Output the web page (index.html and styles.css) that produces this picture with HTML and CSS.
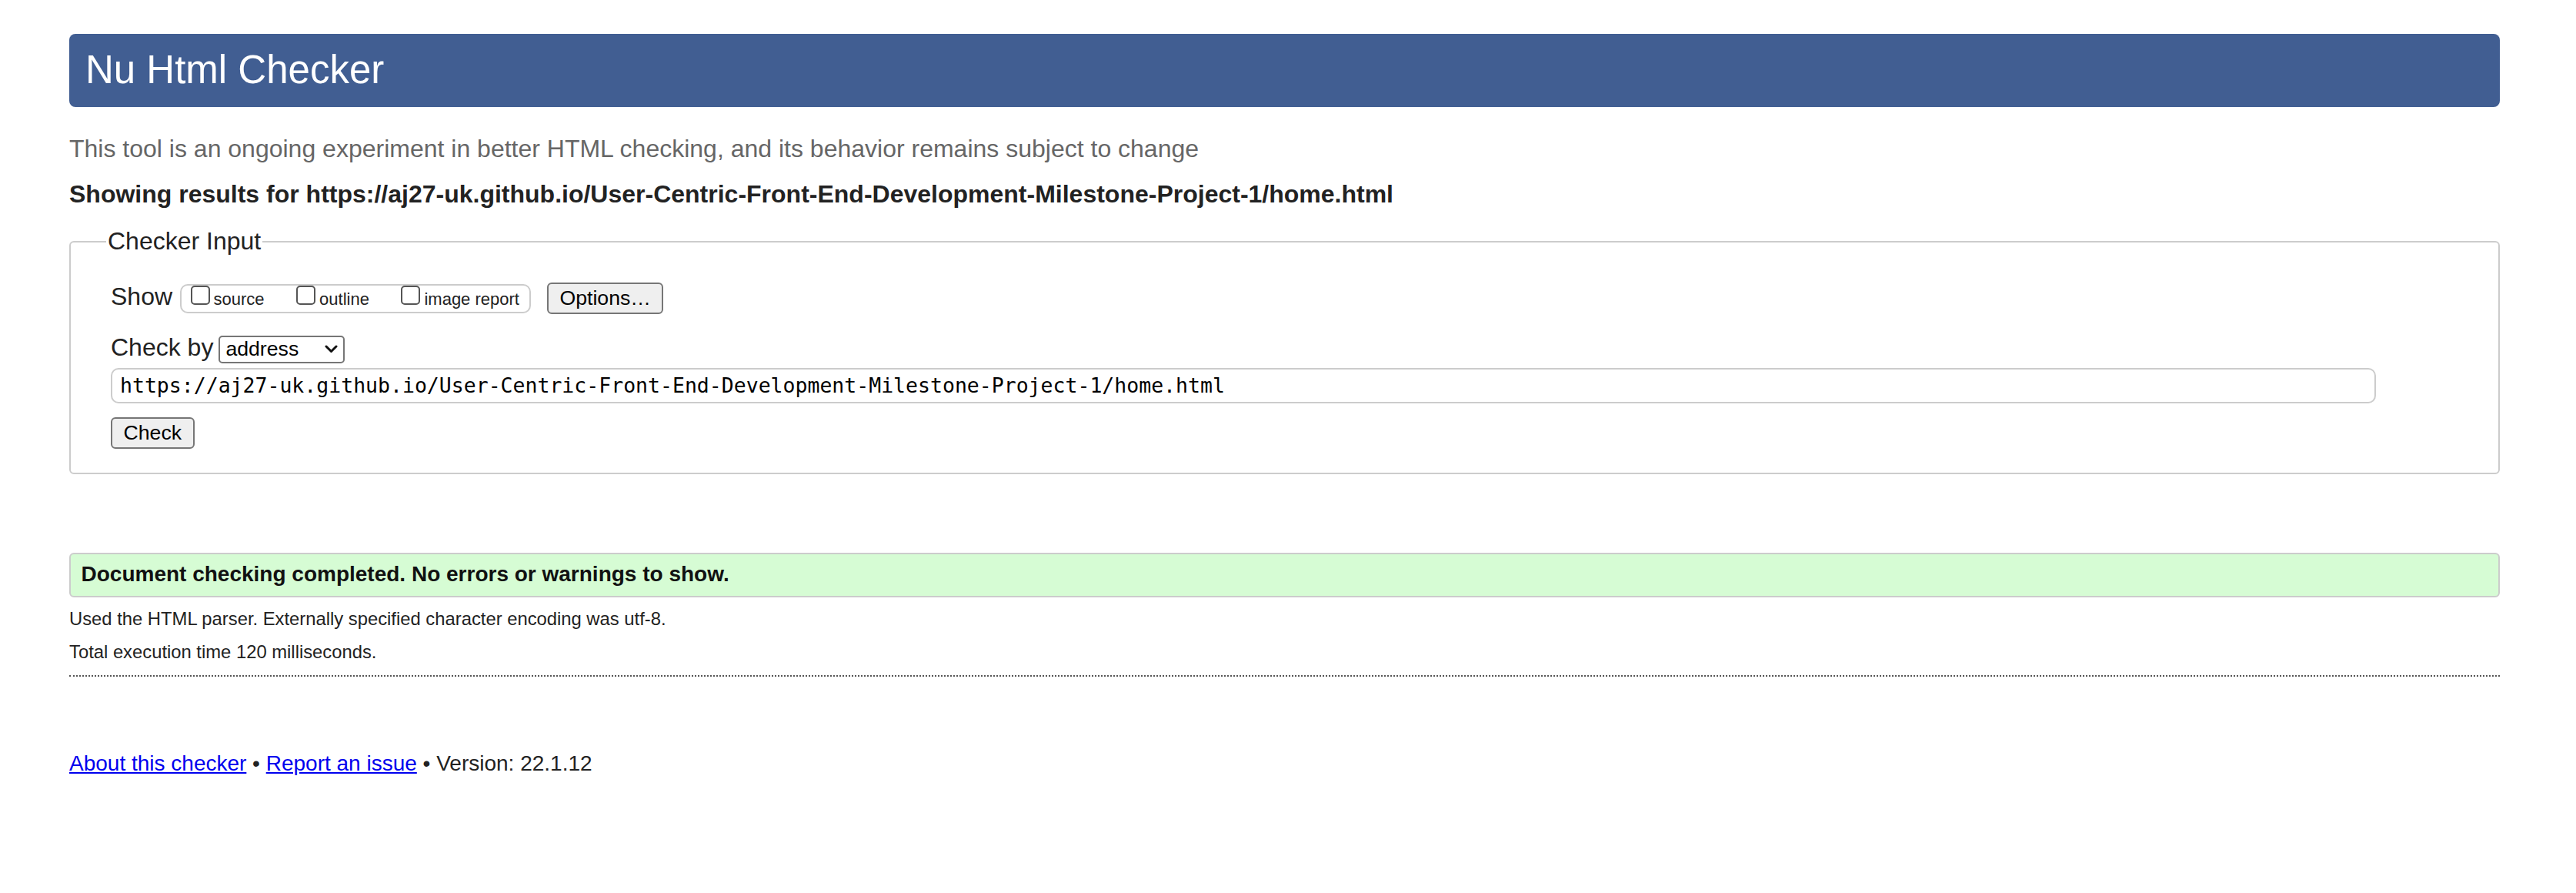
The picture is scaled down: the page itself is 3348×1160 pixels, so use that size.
FILE: index.html
```html
<!DOCTYPE html>
<html lang="en">
<head>
<meta charset="utf-8">
<title>Showing results for https://aj27-uk.github.io/User-Centric-Front-End-Development-Milestone-Project-1/home.html - Nu Html Checker</title>
<link rel="stylesheet" href="styles.css">
</head>
<body>
<div class="page">
  <h1 class="banner">Nu Html Checker</h1>
  <p class="intro">This tool is an ongoing experiment in better HTML checking, and its behavior remains subject to change</p>
  <p class="showing">Showing results for https://aj27-uk.github.io/User-Centric-Front-End-Development-Milestone-Project-1/home.html</p>

  <fieldset class="checker">
    <legend class="checker-legend">Checker Input</legend>
    <div class="row">
      <span class="row-label row-label-show">Show</span>
      <div class="opts">
        <label class="opt"><input type="checkbox" class="cb"><span class="opt-text">source</span></label>
        <label class="opt"><input type="checkbox" class="cb"><span class="opt-text">outline</span></label>
        <label class="opt"><input type="checkbox" class="cb"><span class="opt-text">image report</span></label>
      </div>
      <button type="button" class="btn btn-options">Options…</button>
    </div>
    <div class="row row-by">
      <span class="row-label row-label-by">Check by</span>
      <div class="select">
        <span class="select-text">address</span>
        <svg class="chevron" width="17" height="11" viewBox="0 0 17 11" aria-hidden="true"><polyline points="2,2 8.5,8.5 15,2" fill="none" stroke="#111" stroke-width="3" stroke-linecap="round" stroke-linejoin="round"/></svg>
      </div>
    </div>
    <div class="url-wrap">
      <input class="url" type="url" value="https://aj27-uk.github.io/User-Centric-Front-End-Development-Milestone-Project-1/home.html">
    </div>
    <div class="submit-wrap">
      <button type="button" class="btn">Check</button>
    </div>
  </fieldset>

  <p class="success">Document checking completed. No errors or warnings to show.</p>
  <p class="details details-first">Used the HTML parser. Externally specified character encoding was utf-8.</p>
  <p class="details">Total execution time 120 milliseconds.</p>
  <hr class="rule">

  <p class="footer"><a href="#about" class="footer-link">About this checker</a> • <a href="#issue" class="footer-link">Report an issue</a> • Version: 22.1.12</p>
</div>
</body>
</html>
```

FILE: styles.css
```css
* {
  box-sizing: border-box;
}

html {
  background: #fff;
}

body {
  margin: 0;
  font-family: "Liberation Sans", Arial, Helvetica, sans-serif;
  font-size: 32px;
  color: #222;
}

.page {
  margin: 44px 99px 0 90px;
}

.banner {
  margin: 0;
  padding: 17px 21px 19px;
  background: #415e92;
  color: #fff;
  font-size: 51px;
  font-weight: normal;
  line-height: normal;
  border-radius: 8px;
}

.intro {
  margin: 35.5px 0 0;
  color: #666;
}

.showing {
  margin: 22.5px 0 0;
  font-weight: bold;
}

.checker {
  margin: 24.4px 0 0;
  padding: 35px 52px 31px 52px;
  border: 2px solid #ccc;
  border-radius: 6px;
  min-width: 0;
}

.checker-legend {
  margin-left: -6px;
  padding: 0 2px;
}

.row {
  display: flex;
  align-items: flex-start;
}

.row-by {
  margin-top: 24.8px;
}

.row-label {
  line-height: normal;
}

.row-label-show {
  margin-right: 9.5px;
}

.row-label-by {
  margin-right: 7px;
}

.opts {
  display: flex;
  align-items: flex-start;
  gap: 41.5px;
  height: 38px;
  margin-top: 2px;
  padding: 0 13px 0 12px;
  border: 2px solid #ccc;
  border-radius: 10px;
}

.opt {
  display: flex;
  align-items: flex-start;
  font-size: 22px;
  color: #222;
}

.cb {
  -webkit-appearance: none;
  appearance: none;
  width: 25px;
  height: 25px;
  margin: 0 5px 0 0;
  border: 2px solid #555;
  border-radius: 5px;
  background: #fff;
}

.opt-text {
  padding-top: 5px;
  line-height: 25px;
}

.btn {
  margin: 0;
  padding: 3px 14.5px;
  font-family: inherit;
  font-size: 26.67px;
  line-height: normal;
  color: #000;
  background: #efefef;
  border: 2px solid #767676;
  border-radius: 6px;
}

.btn-options {
  margin-left: 21px;
}

.select {
  display: flex;
  align-items: center;
  justify-content: space-between;
  width: 164px;
  height: 36px;
  margin-top: 2.5px;
  padding: 0 7px;
  border: 2px solid #767676;
  border-radius: 5px;
  background: #fff;
  font-size: 26.67px;
  color: #000;
}

.chevron {
  display: block;
}

.url-wrap {
  margin-top: 6px;
}

.url {
  display: block;
  width: 2944px;
  height: 46px;
  margin: 0;
  padding: 0 10px;
  border: 2px solid #ccc;
  border-radius: 10px;
  background: #fff;
  font-family: "DejaVu Sans Mono", "Liberation Mono", monospace;
  font-size: 26.5px;
  color: #000;
}

.submit-wrap {
  margin-top: 18px;
}

.success {
  margin: 102px 0 0;
  padding: 10px 13.5px 12px;
  background: #d6fcd4;
  border: 2px solid #ccc;
  border-radius: 6px;
  font-size: 28px;
  font-weight: bold;
  color: #111;
}

.details {
  margin: 14.7px 0 0;
  font-size: 23.8px;
}

.details-first {
  margin-top: 14.4px;
}

.rule {
  height: 0;
  margin: 16.7px 0 0;
  border: 0;
  border-top: 2px dotted #555;
}

.footer {
  margin: 97px 0 0;
  font-size: 28px;
}

.footer-link {
  color: #0000ee;
}
```
